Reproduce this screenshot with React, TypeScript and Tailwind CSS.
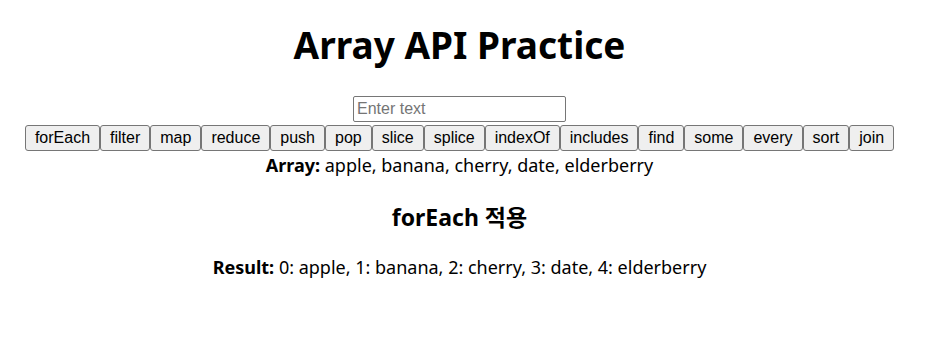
import { useState } from "react";

const fruits = ["apple", "banana", "cherry", "date", "elderberry"];
const methods = ["forEach", "filter", "map", "reduce", "push", "pop", "slice", "splice", "indexOf", "includes", "find", "some", "every", "sort", "join"];

export default function App() {
    const [text, setText] = useState("");
    const [method, setMethod] = useState("forEach");

    const result = fruits.map((f, i) => `${i}: ${f}`).join(", ");

    const uiFont = "font-['Segoe_UI','Noto_Sans','Noto_Sans_CJK_KR',sans-serif]";
    const btn =
        "m-0 rounded-[3px] border border-[#767676] bg-[#efefef] px-[9px] py-[3px] font-['Liberation_Sans',Arial,sans-serif] text-[16px] leading-[18px] text-black";

    return (
        <div className={`w-[919px] bg-white text-center text-black ${uiFont}`}>
            <h1 className="pt-[21px] text-[37px] font-bold leading-[48px]">Array API Practice</h1>

            <div className="mt-[27px] flex flex-col items-center">
                <input
                    type="text"
                    value={text}
                    onChange={(e) => setText(e.target.value)}
                    placeholder="Enter text"
                    className="h-[26px] w-[213px] rounded-[2px] border border-[#767676] px-[3px] font-['Liberation_Sans',Arial,sans-serif] text-[16px] placeholder:text-[#757575]"
                />
                <div className="mt-[3px] flex">
                    {methods.map((m) => (
                        <button key={m} type="button" onClick={() => setMethod(m)} className={btn}>
                            {m}
                        </button>
                    ))}
                </div>
            </div>

            <p className="mt-[1px] text-[18px] leading-[26px]">
                <strong>Array:</strong> {fruits.join(", ")}
            </p>

            <h3 className="mt-[24px] text-[23px] font-bold leading-[30px]">{method} 적용</h3>

            <p className="mt-[22px] text-[18px] leading-[26px]">
                <strong>Result:</strong> {result}
            </p>
        </div>
    );
}
